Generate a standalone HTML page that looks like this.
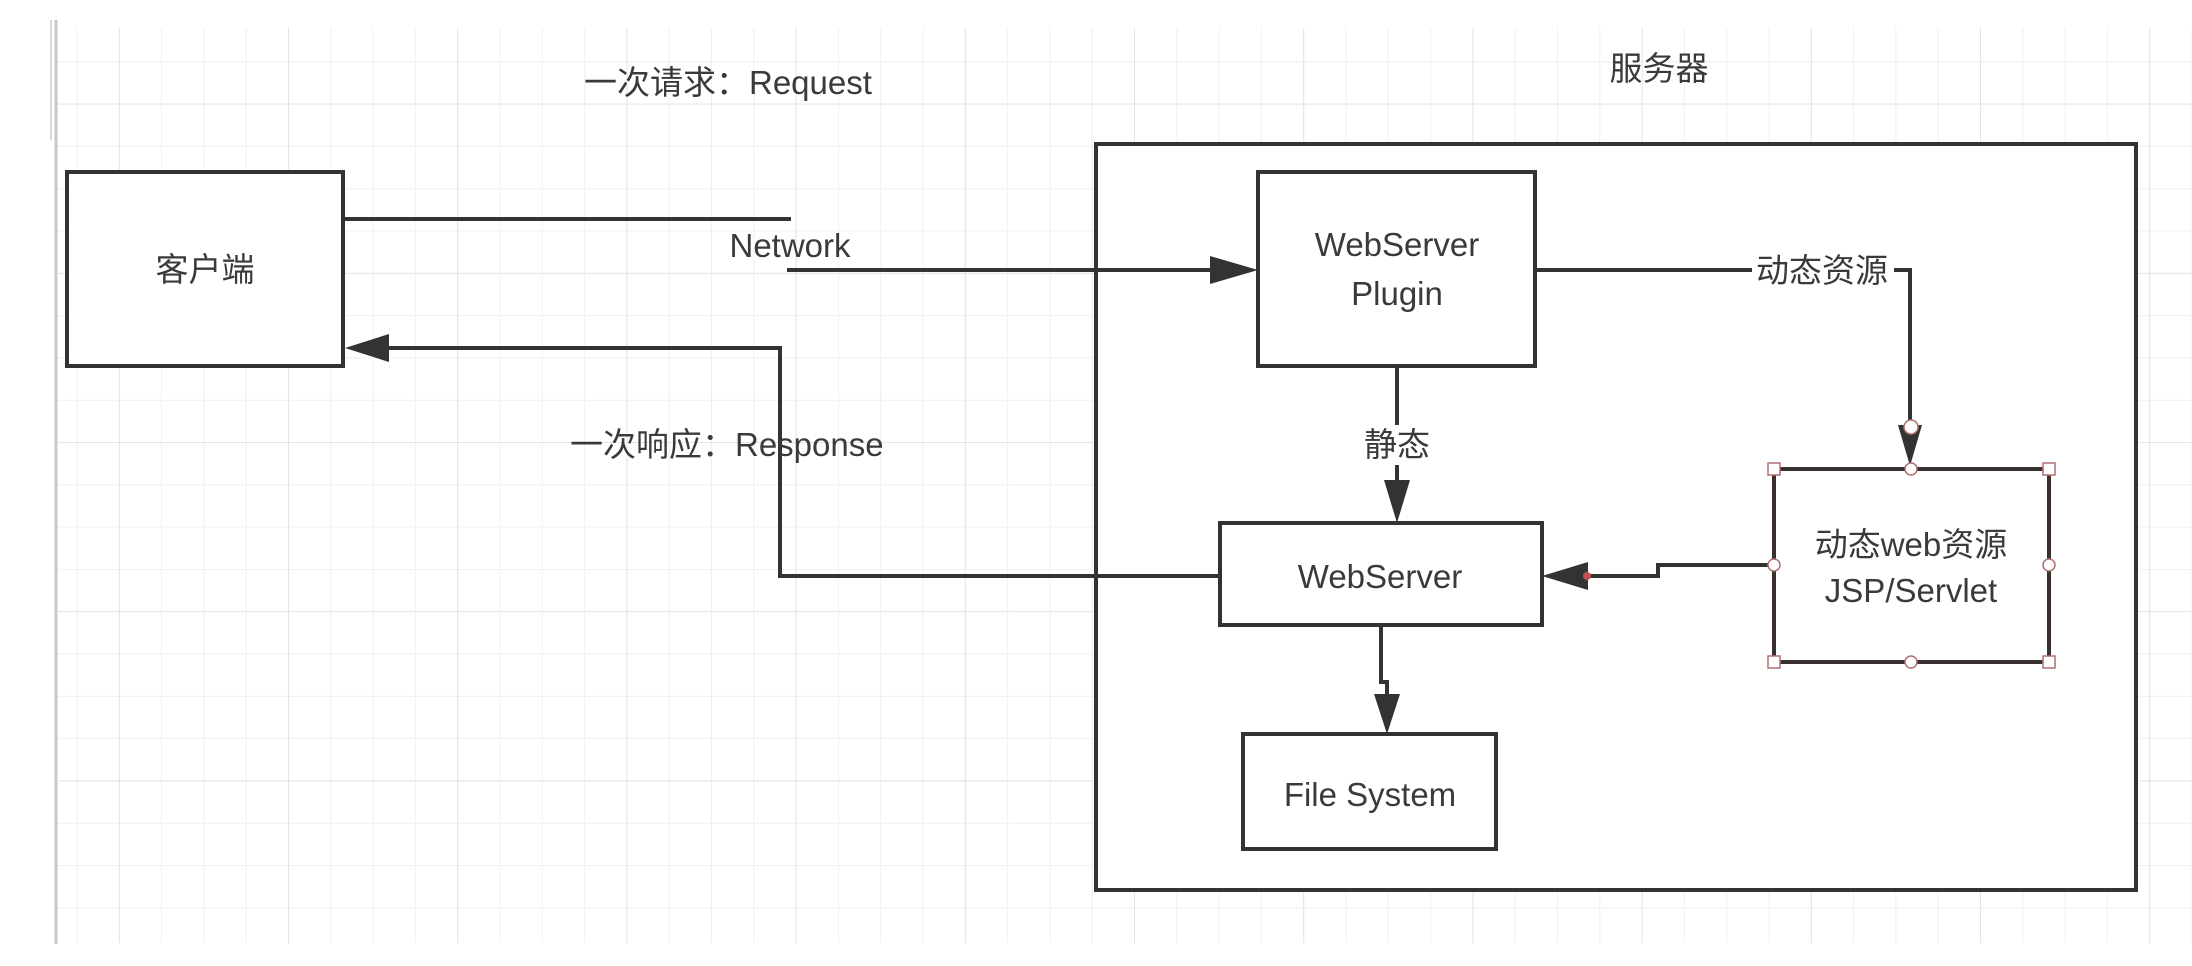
<!DOCTYPE html>
<html><head><meta charset="utf-8"><style>
html,body{margin:0;padding:0;background:#fff;}
svg{display:block;}
text{font-family:"Liberation Sans","Noto Sans CJK SC",sans-serif;fill:#3a3a3a;font-size:33px;}
</style></head><body>
<svg width="2192" height="966" viewBox="0 0 2192 966" xmlns="http://www.w3.org/2000/svg">
<defs>
<pattern id="minor" x="288" y="442" width="42.3" height="42.3" patternUnits="userSpaceOnUse">
<path d="M0 0V42.3M0 0H42.3" stroke="#f0f0f0" stroke-width="2" fill="none"/>
</pattern>
<pattern id="major" x="288" y="442" width="169.2" height="169.2" patternUnits="userSpaceOnUse">
<path d="M0 0V169.2M0 0H169.2" stroke="#e4e4e4" stroke-width="2" fill="none"/>
</pattern>
</defs>
<rect x="58" y="28" width="2134" height="915" fill="url(#minor)"/>
<rect x="58" y="28" width="2134" height="915" fill="url(#major)"/>
<line x1="56" y1="20" x2="56" y2="944" stroke="#c8c8c8" stroke-width="3"/>
<line x1="51" y1="20" x2="51" y2="140" stroke="#d8d8d8" stroke-width="2"/>
<g fill="none" stroke="#333" stroke-width="4">
<rect x="67" y="172" width="276" height="194" fill="#fff"/>
<rect x="1096" y="144" width="1040" height="746" fill="#fff"/>
<rect x="1258" y="172" width="277" height="194" fill="#fff"/>
<rect x="1220" y="523" width="322" height="102" fill="#fff"/>
<rect x="1243" y="734" width="253" height="115" fill="#fff"/>
<path d="M343 219H791"/>
<path d="M787 270H1215"/>
<path d="M1220 576H780V348H385"/>
<path d="M1535 270H1910V425"/>
<path d="M1397 366V480"/>
<path d="M1773 565H1658V576H1585"/>
<path d="M1381 625V682H1387V694"/>
</g>
<g fill="#333">
<polygon points="1258,270 1210,256 1210,284"/>
<polygon points="345,348 389,334 389,362"/>
<polygon points="1397,523 1384,480 1410,480"/>
<polygon points="1542,576 1588,562 1588,590"/>
<polygon points="1387,734 1374,694 1400,694"/>
<polygon points="1910,466 1898,425 1922,425"/>
</g>
<rect x="1752" y="252" width="142" height="36" fill="#fff"/>
<rect x="1370" y="425" width="56" height="40" fill="#fff"/>
<rect x="1774" y="469" width="275" height="193" fill="#fff" stroke="#3a3030" stroke-width="4"/>
<g fill="#fff" stroke="#b07070" stroke-width="1.5">
<rect x="1768" y="463" width="12" height="12"/><rect x="2043" y="463" width="12" height="12"/>
<rect x="1768" y="656" width="12" height="12"/><rect x="2043" y="656" width="12" height="12"/>
<circle cx="1911" cy="469" r="6"/><circle cx="1911" cy="662" r="6"/>
<circle cx="1774" cy="565" r="6"/><circle cx="2049" cy="565" r="6"/>
<circle cx="1911" cy="427" r="7"/>
</g>
<circle cx="1587" cy="576" r="4" fill="#c05050"/>
<text x="205" y="281" text-anchor="middle">客户端</text>
<text x="584" y="94">一次请求：Request</text>
<text x="790" y="257" text-anchor="middle">Network</text>
<text x="570" y="456">一次响应：Response</text>
<text x="1659" y="80" text-anchor="middle">服务器</text>
<text x="1397" y="256" text-anchor="middle">WebServer</text>
<text x="1397" y="305" text-anchor="middle">Plugin</text>
<text x="1822" y="282" text-anchor="middle">动态资源</text>
<text x="1397" y="456" text-anchor="middle">静态</text>
<text x="1380" y="588" text-anchor="middle">WebServer</text>
<text x="1370" y="806" text-anchor="middle">File System</text>
<text x="1911" y="556" text-anchor="middle">动态web资源</text>
<text x="1911" y="602" text-anchor="middle">JSP/Servlet</text>
</svg>
</body></html>
